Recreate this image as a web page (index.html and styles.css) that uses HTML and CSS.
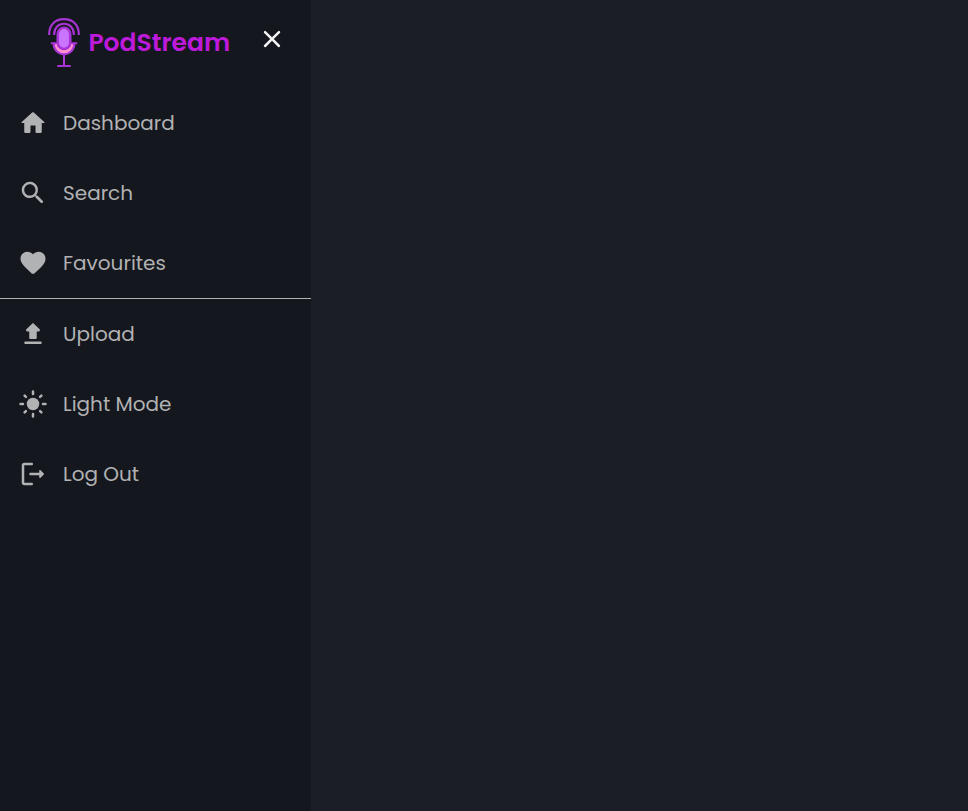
FILE: index.html
```html
<!DOCTYPE html>
<html lang="en">
<head>
<meta charset="utf-8">
<title>PodStream</title>
<link rel="stylesheet" href="styles.css">
</head>
<body>
<div class="app">
<aside class="sidebar">
<header class="header">
<div class="brand">
<svg class="logo" viewBox="0 0 32 50" fill="none" stroke="#a934d6" stroke-width="2.100">
<path d="M1.200 17v-1C1.200 7 7 1.100 16 1.100S30.800 7 30.800 16v1M6.200 17v-1c0-6 4-10.200 9.800-10.200s9.800 4.200 9.800 10.200v1"/>
<path d="M5.600 25.200c0 6.500 4.400 11 10.400 11s10.400-4.500 10.400-11" fill="#ff91d0"/>
<path d="M2.800 25.200h6M23.200 25.200h6M16 36v12M9.300 48h13.400"/>
<rect x="9.800" y="9.800" width="12.400" height="21.200" rx="6.200" fill="#cb75ff" stroke-width="2.600"/>
</svg>
<span class="name">PodStream</span>
</div>
<svg class="icon close" viewBox="0 0 24 24"><path d="M18.300 5.710a1 1 0 0 0-1.410 0L12 10.590 7.110 5.700A1 1 0 0 0 5.700 7.110L10.590 12 5.700 16.890a1 1 0 0 0 1.410 1.410L12 13.410l4.890 4.890a1 1 0 0 0 1.410-1.410L13.410 12l4.890-4.890a1 1 0 0 0 0-1.400z"/></svg>
</header>
<nav>
<a class="item"><svg class="icon" viewBox="0 0 24 24"><path d="M10 19v-5h4v5c0 .55.45 1 1 1h3c.55 0 1-.45 1-1v-7h1.700c.46 0 .68-.57.33-.87L12.670 3.600c-.38-.34-.96-.34-1.340 0l-8.360 7.530c-.34.3-.13.87.33.87H5v7c0 .55.45 1 1 1h3c.55 0 1-.45 1-1z"/></svg><span>Dashboard</span></a>
<a class="item"><svg class="icon" viewBox="0 0 24 24"><path d="M15.500 14h-.79l-.28-.27a6.500 6.500 0 0 0 1.480-5.340c-.47-2.780-2.790-5-5.590-5.340a6.505 6.505 0 0 0-7.270 7.270c.34 2.800 2.560 5.120 5.340 5.590a6.500 6.500 0 0 0 5.340-1.480l.27.28v.79l4.250 4.250c.41.41 1.080.41 1.490 0s.41-1.080 0-1.490L15.500 14zm-6 0C7.010 14 5 11.990 5 9.500S7.010 5 9.500 5 14 7.010 14 9.500 11.990 14 9.500 14z"/></svg><span>Search</span></a>
<a class="item"><svg class="icon" viewBox="0 0 24 24"><path d="M13.350 20.130c-.76.69-1.930.69-2.690-.01l-.11-.1C5.300 15.270 1.870 12.160 2 8.280c.06-1.700.93-3.330 2.340-4.290 2.640-1.800 5.900-.96 7.660 1.100 1.760-2.060 5.020-2.910 7.660-1.100 1.410.96 2.280 2.590 2.340 4.290.14 3.880-3.300 6.990-8.550 11.760l-.1.090z"/></svg><span>Favourites</span></a>
<hr class="divider">
<a class="item"><svg class="icon" viewBox="0 0 24 24"><path d="M7.400 10h1.590v5c0 .55.45 1 1 1h4c.55 0 1-.45 1-1v-5h1.590c.89 0 1.340-1.080.71-1.710L12.700 3.700c-.39-.39-1.020-.39-1.410 0L6.700 8.290c-.63.63-.19 1.710.7 1.710zM5 19c0 .55.45 1 1 1h12c.55 0 1-.45 1-1s-.45-1-1-1H6c-.55 0-1 .45-1 1z"/></svg><span>Upload</span></a>
<a class="item"><svg class="icon" viewBox="0 0 24 24"><circle cx="12" cy="12" r="5"/><path class="rays" d="M2 12h2M20 12h2M12 2v2M12 20v2M5.280 5.280l1.060 1.060M17.660 17.660l1.060 1.060M5.280 18.720l1.060-1.060M17.660 6.340l1.060-1.060"/></svg><span>Light Mode</span></a>
<a class="item"><svg class="icon" viewBox="0 0 24 24"><path d="M5 5h6c.55 0 1-.45 1-1s-.45-1-1-1H5c-1.100 0-2 .9-2 2v14c0 1.100.9 2 2 2h6c.55 0 1-.45 1-1s-.45-1-1-1H5V5z"/><path d="M20.650 11.650l-2.790-2.790c-.32-.32-.86-.1-.86.35V11h-7c-.55 0-1 .45-1 1s.45 1 1 1h7v1.790c0 .45.54.67.85.35l2.790-2.790c.2-.19.2-.51.01-.7z"/></svg><span>Log Out</span></a>
</nav>
</aside>
<main class="content"></main>
</div>
</body>
</html>
```
FILE: styles.css
```css
* { box-sizing: border-box; }
body { margin: 0; font-family: Poppins, Inter, sans-serif; background: #1c1e27; }
.app { display: flex; height: 811px; }
.sidebar { width: 311px; flex: none; background: #15171e; color: #b1b2b3; }
.content { flex: 1; background: #1c1e27; }
.header { display: flex; justify-content: space-between; align-items: flex-start; height: 88px; padding: 18px 24px 0 48px; }
.brand { display: flex; align-items: center; gap: 8.4px; height: 50px; }
.logo { width: 32px; height: 50px; flex: none; }
.name { color: #be1adb; font-size: 25px; font-weight: 600; line-height: 30px; white-space: nowrap; }
.icon { width: 30px; height: 30px; flex: none; fill: currentColor; }
.close { color: #f2f3f4; margin-top: 6px; }
.item { display: flex; align-items: center; gap: 15px; height: 70px; padding-left: 18px; font-size: 20px; line-height: 30px; white-space: nowrap; }
.divider { height: 1px; margin: 0; border: 0; background: #b1b2b3; }
.rays { stroke: currentColor; stroke-width: 2; stroke-linecap: round; }
```
